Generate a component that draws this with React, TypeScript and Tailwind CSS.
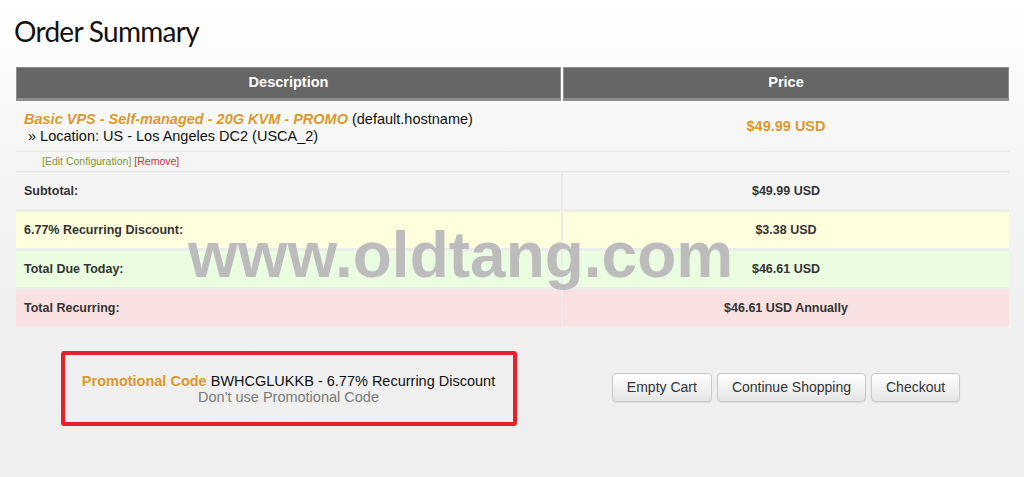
import React from "react";

const orange = "text-[#d99a2b]";

const totals = [
  { label: "Subtotal:", value: "$49.99 USD", bg: "bg-[#f4f4f4]" },
  { label: "6.77% Recurring Discount:", value: "$3.38 USD", bg: "bg-[#ffffdd]" },
  { label: "Total Due Today:", value: "$46.61 USD", bg: "bg-[#ebfde1]" },
  { label: "Total Recurring:", value: "$46.61 USD Annually", bg: "bg-[#f9e1e1]" },
];

const Button = ({ children }: { children: React.ReactNode }) => (
  <button className="h-[29px] px-[14px] rounded-[4px] border border-[#c8c8c8] bg-gradient-to-b from-white to-[#e4e4e4] text-[14px] text-[#333] shadow-[0_1px_1px_rgba(0,0,0,0.08)]">
    {children}
  </button>
);

export default function App() {
  return (
    <main className="relative w-[1024px] h-[477px] overflow-hidden bg-[linear-gradient(to_bottom,#ffffff_0%,#f6f6f6_30%,#f0f0f0_60%,#efefef_100%)] font-['Liberation_Sans',Arial,sans-serif]">
      <h1 className="pl-[14px] pt-[12px] h-[67px] text-[28px] leading-[38px] tracking-[-0.7px] text-[#111] font-['Lato',sans-serif] font-normal">
        Order Summary
      </h1>

      <div className="ml-[16px] w-[993px] flex flex-col">
        {/* header */}
        <div className="grid grid-cols-[545px_446px] gap-x-[2px] bg-white">
          <div className="h-[34px] bg-[#666] border border-[#8e8e8e] border-b-[3px] flex items-center justify-center text-white font-bold text-[14.5px]">
            Description
          </div>
          <div className="h-[34px] bg-[#666] border border-[#8e8e8e] border-b-[3px] flex items-center justify-center text-white font-bold text-[14.5px]">
            Price
          </div>
        </div>

        {/* product */}
        <div className="grid grid-cols-[545px_446px] gap-x-[2px] border-b border-[#e6e6e6]">
          <div className="h-[50px] pl-[8px] pt-[10px] text-[14.5px] leading-[17px] text-[#111]">
            <div>
              <span className={`${orange} font-bold italic`}>
                Basic VPS - Self-managed - 20G KVM - PROMO
              </span>{" "}
              (default.hostname)
            </div>
            <div>&nbsp;» Location: US - Los Angeles DC2 (USCA_2)</div>
          </div>
          <div className={`h-[50px] pt-[2px] flex items-center justify-center font-bold text-[14.5px] ${orange}`}>
            $49.99 USD
          </div>
        </div>

        <div className="h-[20px] pl-[26px] pt-[1px] flex items-center text-[10.5px] border-b border-[#e6e6e6]">
          <span className="text-[#7f9a33]">[Edit Configuration]</span>
          <span className="ml-[3px] text-[#cc3333]">[Remove]</span>
        </div>

        <div className="flex flex-col gap-y-[3px] bg-[#ececec] pt-[1px]">
          {totals.map((row) => (
            <div
              key={row.label}
              className="grid grid-cols-[545px_446px] gap-x-[2px] h-[36px]"
            >
              <div className={`${row.bg} pl-[8px] flex items-center font-bold text-[12.5px] text-[#333]`}>
                {row.label}
              </div>
              <div className={`${row.bg} flex items-center justify-center font-bold text-[12.5px] text-[#333]`}>
                {row.value}
              </div>
            </div>
          ))}
        </div>

        {/* promo + buttons */}
        <div className="grid grid-cols-[545px_446px] gap-x-[2px] mt-[25px]">
          <div className="flex justify-center">
            <div className="w-[456px] h-[75px] border-[4px] border-[#e8202a] rounded-[3px] flex flex-col items-center justify-center text-[14.5px] leading-[16px]">
              <div className="text-[#111]">
                <span className={`${orange} font-bold`}>Promotional Code</span>{" "}
                BWHCGLUKKB - 6.77% Recurring Discount
              </div>
              <div className="text-[#7a7a7a]">Don't use Promotional Code</div>
            </div>
          </div>
          <div className="flex items-center justify-center gap-x-[5px] pb-[3px]">
            <Button>Empty Cart</Button>
            <Button>Continue Shopping</Button>
            <Button>Checkout</Button>
          </div>
        </div>
      </div>

      {/* watermark */}
      <div className="absolute left-[188px] top-[223px] pointer-events-none text-[64px] leading-[64px] font-bold text-[#bcbcbc] font-['Liberation_Sans',Arial,sans-serif]">
        www.oldtang.com
      </div>
    </main>
  );
}
